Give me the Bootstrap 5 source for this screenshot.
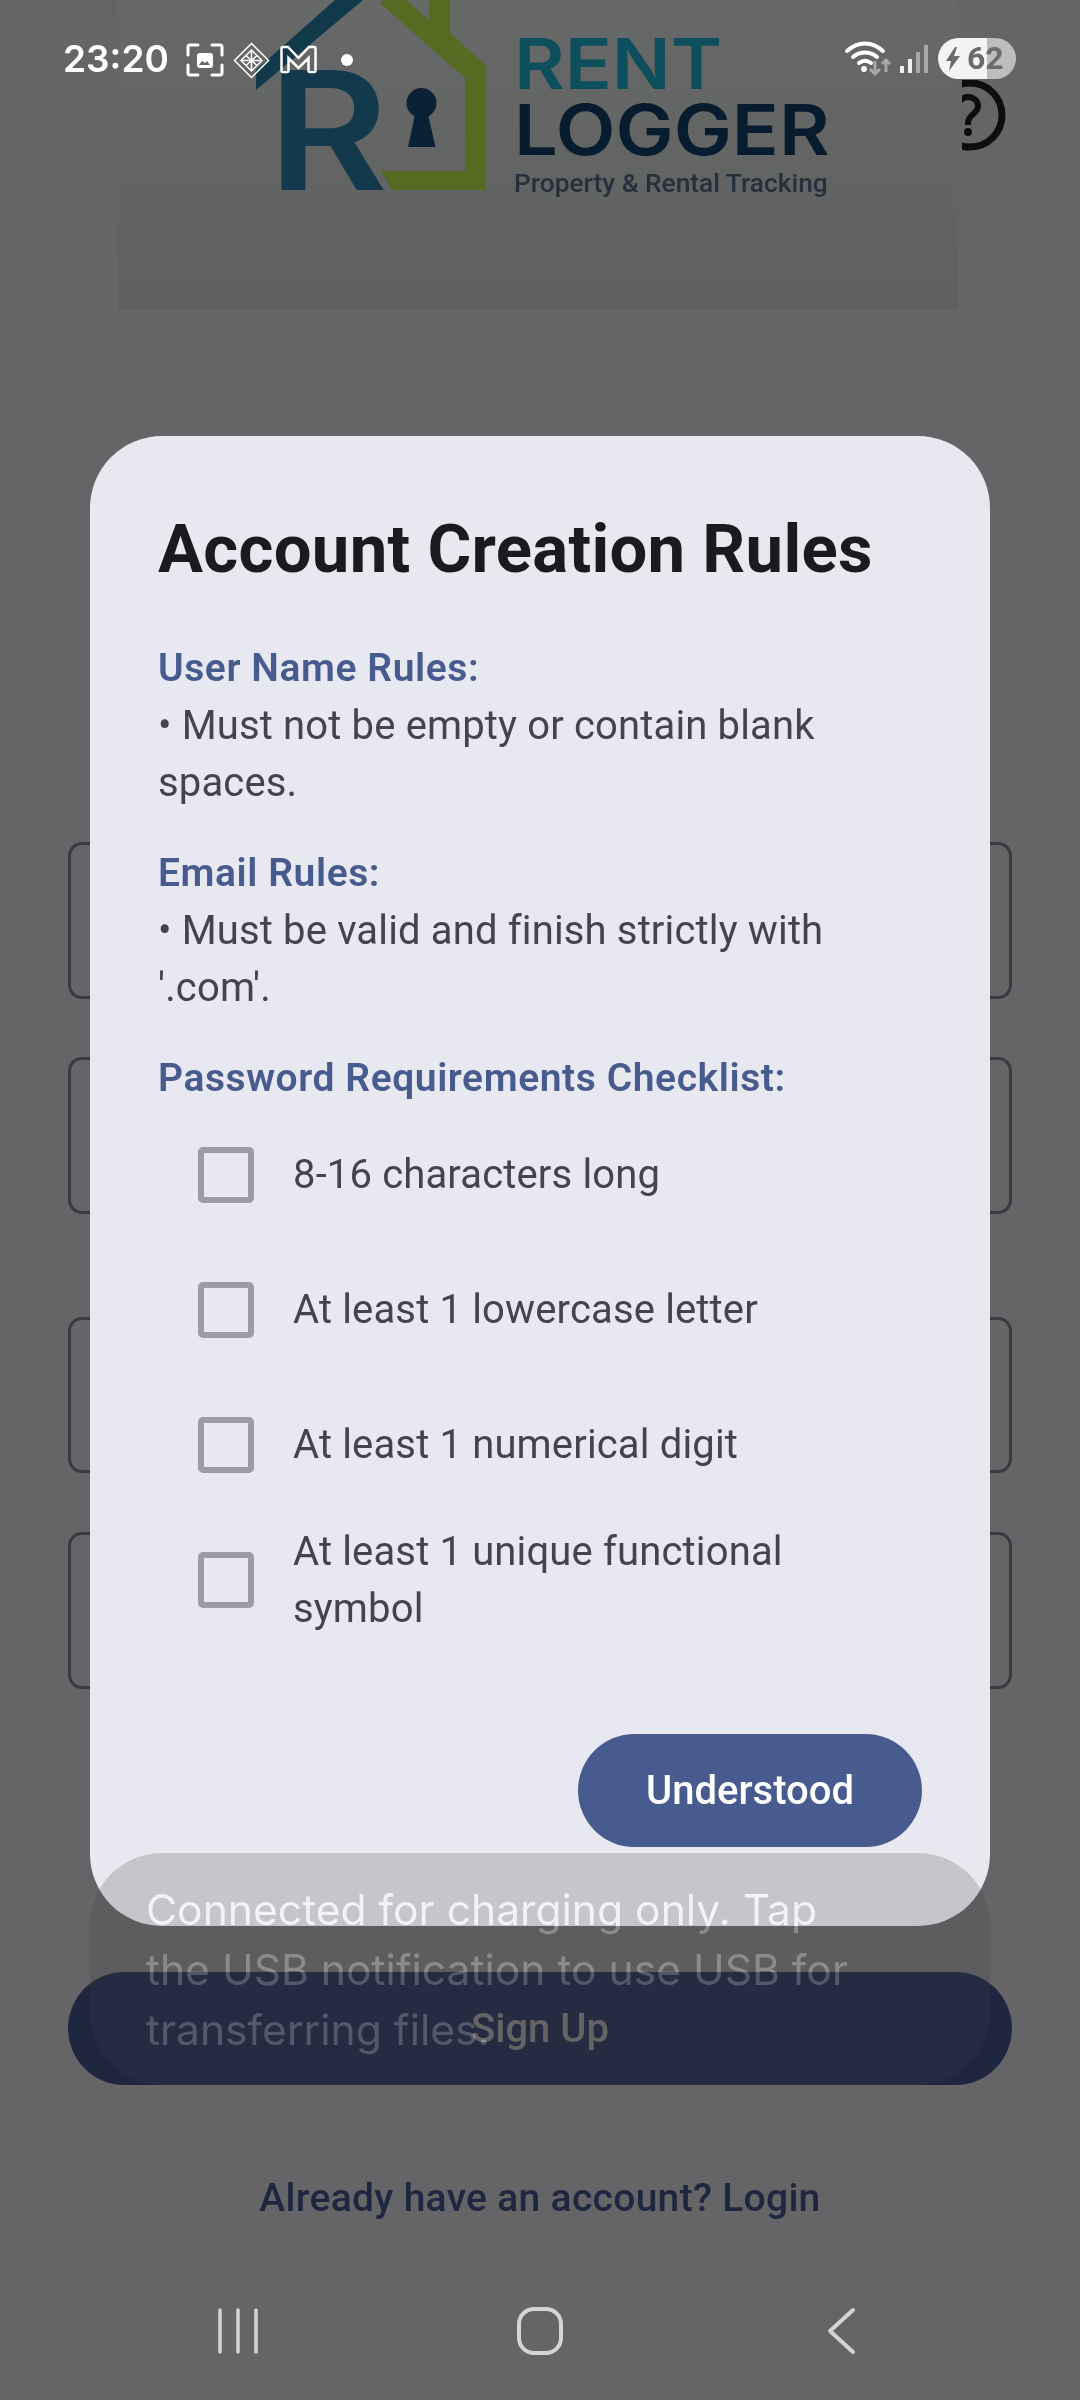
<!DOCTYPE html>
<html lang="en">
<head>
  <meta charset="UTF-8" />
  <meta name="viewport" content="width=device-width, initial-scale=1.0"/>
  <title>Account Creation Rules</title>
  <link href="https://cdn.jsdelivr.net/npm/bootstrap@5.3.0/dist/css/bootstrap.min.css" rel="stylesheet" />
  <style>
    body {
      width: 1080px;
      height: 2400px;
      background: #656567;
      font-family: Roboto, sans-serif;
      overflow: hidden;
    }
    .screen { width: 1080px; height: 2400px; }

    /* page behind the dialog */
    .logo-panel {
      width: 840px;
      height: 310px;
      margin-left: 118px;
      background: linear-gradient(180deg, #676868, #5f6060);
      overflow: hidden;
    }
    .logo-mark { width: 240px; height: 200px; margin-left: 138px; margin-right: 18px; flex: none; }
    .logo-words { padding-top: 27px; font-family: Inter, sans-serif; }
    .logo-rent, .logo-logger { font-size: 70px; font-weight: 600; transform: scaleX(1.11); transform-origin: left center; }
    .logo-rent { line-height: 74px; color: #0d4f5c; }
    .logo-logger { line-height: 70px; color: #071d2f; margin-top: -6px; }
    .logo-tag { font-family: Roboto, sans-serif; font-size: 26.3px; line-height: 32px; font-weight: 500; color: #25303c; margin-top: 2px; white-space: nowrap; }
    .field-box {
      width: 944px;
      height: 157px;
      margin-left: 68px;
      background: transparent;
      border: 3px solid #3a3a40;
      border-radius: 14px;
    }
    .field-one { margin-top: 532px; }
    .field-two { margin-top: 58px; }
    .field-three { margin-top: 103px; height: 156px; }
    .field-four { margin-top: 59px; }
    .signup-btn {
      width: 944px;
      height: 113px;
      margin: 283px 0 0 68px;
      background: #1e2640;
      border: 0;
      border-radius: 57px;
      color: #6e6e6e;
      font-size: 40px;
      font-weight: 500;
    }
    .login-line {
      margin-top: 90px;
      font-size: 39px;
      line-height: 46px;
      font-weight: 500;
      color: #1e2640;
      letter-spacing: .3px;
    }
    .nav-keys { height: 138px; }
    .nav-key { width: 302px; }

    /* status bar and help icon */
    .help-icon { top: 80px; left: 962px; }
    .status-bar { top: 0; left: 0; width: 1080px; height: 100px; color: #fff; }
    .status-time { left: 63px; top: 37px; font-family: Inter, sans-serif; font-size: 37px; line-height: 44px; font-weight: 600; }
    .status-svg { left: 0; top: 0; }
    .batt-pill {
      left: 938px;
      top: 38px;
      width: 78px;
      height: 41px;
      border-radius: 21px;
      background: linear-gradient(90deg, #f4f4f4 63%, #bdbdbd 63%);
      color: #6b6b6b;
      font-size: 32px;
      font-weight: 700;
      line-height: 41px;
      padding-left: 29px;
    }
    .bolt-icon { left: 946px; top: 47px; }

    /* dialog */
    .rules-dialog {
      left: 90px;
      top: 436px;
      width: 900px;
      height: 1490px;
      padding: 69px 68px 79px;
      background: #e8e8f0;
      border: 0;
      border-radius: 72px;
    }
    .rules-title { font-size: 67px; line-height: 88px; font-weight: 700; color: #1a1b20; margin: 0 0 47px; letter-spacing: .3px; white-space: nowrap; }
    .rules-block { font-size: 40px; line-height: 57px; color: #44444f; letter-spacing: .15px; margin-bottom: 34px; }
    .rules-head { font-size: 39px; line-height: 57px; font-weight: 600; color: #475b8f; letter-spacing: .58px; margin: 0; }
    .check-row { height: 135px; padding-left: 40px; gap: 39px; font-size: 40px; line-height: 57px; color: #44444f; letter-spacing: .15px; }
    .check-row .form-check-input {
      width: 56px;
      height: 56px;
      margin: 0;
      flex: none;
      background-color: transparent;
      border: 6px solid #9c9ca4;
      border-radius: 5px;
    }
    .understood-btn {
      width: 344px;
      height: 113px;
      margin-top: 87px;
      background: #475b8f;
      border: 0;
      border-radius: 57px;
      color: #fff;
      font-size: 40px;
      font-weight: 500;
    }

    /* toast */
    .usb-toast {
      left: 90px;
      top: 1853px;
      width: 900px;
      height: 232px;
      padding: 27px 120px 28px 56px;
      border-radius: 72px;
      background: rgba(68, 68, 68, .21);
    }
    .usb-text {
      font-family: Inter, sans-serif;
      font-size: 42.6px;
      line-height: 60px;
      color: rgb(46, 46, 44);
      mix-blend-mode: plus-lighter;
    }
  </style>
</head>
<body>
  <div class="screen position-relative">

    <!-- page behind -->
    <div class="d-flex flex-column h-100">
      <div class="logo-panel d-flex flex-shrink-0">
        <svg class="logo-mark" viewBox="258 0 240 200">
          <polygon points="337,0 365,0 258,90 258,70" fill="#12394a"/>
          <polygon points="382,3 386,0 408,0 431,20 431,0 452,0 452,33 487,65 487,190 394,190 383,171 467,171 467,78" fill="#556b22"/>
          <circle cx="423.500" cy="103" r="15" fill="#0a2136"/>
          <polygon points="418,110 429,110 437.500,147 410,147" fill="#0a2136"/>
          <text x="270" y="190" font-family="Inter, sans-serif" font-size="165" font-weight="600" fill="#123a4c" textLength="120" lengthAdjust="spacingAndGlyphs">R</text>
        </svg>
        <div class="logo-words">
          <div class="logo-rent">RENT</div>
          <div class="logo-logger">LOGGER</div>
          <div class="logo-tag">Property &amp; Rental Tracking</div>
        </div>
      </div>

      <input class="form-control field-box field-one flex-shrink-0" type="text" />
      <input class="form-control field-box field-two flex-shrink-0" type="text" />
      <input class="form-control field-box field-three flex-shrink-0" type="text" />
      <input class="form-control field-box field-four flex-shrink-0" type="text" />
      <button class="btn signup-btn flex-shrink-0" type="button">Sign Up</button>
      <div class="login-line text-center">Already have an account? Login</div>

      <div class="nav-keys d-flex justify-content-center align-items-center mt-auto">
        <div class="nav-key d-flex justify-content-center">
          <svg width="40" height="46" viewBox="0 0 40 46" fill="none" stroke="#d4d4d4" stroke-width="3.500" stroke-linecap="round">
            <path d="M2 2v42M20 2v42M38 2v42"/>
          </svg>
        </div>
        <div class="nav-key d-flex justify-content-center">
          <svg width="46" height="48" viewBox="0 0 46 48" fill="none" stroke="#d4d4d4" stroke-width="4">
            <rect x="2" y="2" width="42" height="44" rx="15"/>
          </svg>
        </div>
        <div class="nav-key d-flex justify-content-center">
          <svg width="30" height="48" viewBox="0 0 30 48" fill="none" stroke="#d4d4d4" stroke-width="4" stroke-linecap="round" stroke-linejoin="round">
            <path d="M26 3 3 24l23 21"/>
          </svg>
        </div>
      </div>
    </div>

    <svg class="help-icon position-absolute" width="48" height="72" viewBox="962 80 48 72" fill="none" stroke="#0d0d0f" stroke-width="7">
      <circle cx="970" cy="115" r="32"/>
      <path d="M957 108c1-7 6-11 11-11 6 0 10 4 10 9 0 8-10 8-10 17v2" stroke-width="6"/>
      <circle cx="968" cy="132" r="2" stroke-width="4" fill="#0d0d0f"/>
    </svg>

    <!-- dialog -->
    <div class="card rules-dialog position-absolute">
      <h2 class="rules-title">Account Creation Rules</h2>
      <div class="rules-block">
        <p class="rules-head">User Name Rules:</p>
        • Must not be empty or contain blank spaces.
      </div>
      <div class="rules-block">
        <p class="rules-head">Email Rules:</p>
        • Must be valid and finish strictly with '.com'.
      </div>
      <p class="rules-head">Password Requirements Checklist:</p>
      <div class="check-row d-flex align-items-center">
        <input class="form-check-input" type="checkbox" />
        <span>8-16 characters long</span>
      </div>
      <div class="check-row d-flex align-items-center">
        <input class="form-check-input" type="checkbox" />
        <span>At least 1 lowercase letter</span>
      </div>
      <div class="check-row d-flex align-items-center">
        <input class="form-check-input" type="checkbox" />
        <span>At least 1 numerical digit</span>
      </div>
      <div class="check-row d-flex align-items-center">
        <input class="form-check-input" type="checkbox" />
        <span>At least 1 unique functional symbol</span>
      </div>
      <div class="d-flex justify-content-end">
        <button class="btn understood-btn" type="button">Understood</button>
      </div>
    </div>

    <!-- toast -->
    <div class="usb-toast position-absolute">
      <div class="usb-text">Connected for charging only. Tap the USB notification to use USB for transferring files.</div>
    </div>

    <!-- status bar -->
    <div class="status-bar position-absolute">
      <span class="status-time position-absolute">23:20</span>
      <svg class="status-svg position-absolute" width="1080" height="100" viewBox="0 0 1080 100" fill="none" stroke="#fff">
        <!-- screenshot -->
        <path d="M198 45h-8a2 2 0 0 0-2 2v8M212 45h8a2 2 0 0 1 2 2v8M198 75h-8a2 2 0 0 1-2-2v-8M212 75h8a2 2 0 0 0 2-2v-8" stroke-width="3" stroke-linecap="round"/>
        <rect x="197" y="53" width="16" height="15" rx="3" fill="#fff" stroke="none"/>
        <path d="M199 65l3-4 3 2 2-2 3 4z" fill="#656567" stroke="none"/>
        <!-- diamond -->
        <path d="M251.500 43.500 268.500 60.500 251.500 77.500 234.500 60.500zM251.500 50 262 60.500 251.500 71 241 60.500zM241 60.500h21M246 55.500l11 10M257 55.500l-11 10M251.500 50v21" stroke-width="1.500"/>
        <!-- M -->
        <path d="M283 47h5l10.500 11L309 47h5a1.500 1.500 0 0 1 1.500 1.500v22a1.500 1.500 0 0 1-1.500 1.500h-4a1.500 1.500 0 0 1-1.500-1.500V58l-10 10-10-10v12.500a1.500 1.500 0 0 1-1.500 1.500h-4a1.500 1.500 0 0 1-1.500-1.500v-22A1.500 1.500 0 0 1 283 47z" stroke-width="2.500"/>
        <circle cx="347" cy="60" r="6" fill="#fff" stroke="none"/>
        <!-- wifi -->
        <path d="M847 51c11-10 25-10 36 0" stroke-width="4" stroke-linecap="round"/>
        <path d="M853 57c7-6 17-6 24 0" stroke-width="4" stroke-linecap="round"/>
        <path d="M859 63c4-3 8-3 12 0" stroke-width="4" stroke-linecap="round"/>
        <circle cx="864" cy="69" r="3" fill="#fff" stroke="none"/>
        <path d="M875 61v13M870 69l5 5 5-5" stroke="#a8a8a8" stroke-width="3"/>
        <path d="M886 72V60M882 64l4-4 4 4" stroke="#a8a8a8" stroke-width="3"/>
        <!-- signal -->
        <rect x="900" y="66" width="4" height="7" fill="#f0f0f0" stroke="none"/>
        <rect x="908" y="59" width="4" height="14" fill="#f0f0f0" stroke="none"/>
        <rect x="916" y="52" width="4" height="21" fill="#a8a8a8" stroke="none"/>
        <rect x="924" y="45" width="4" height="28" fill="#a8a8a8" stroke="none"/>
      </svg>
      <div class="batt-pill position-absolute">62</div>
      <svg class="bolt-icon position-absolute" width="14" height="24" viewBox="0 0 14 24">
        <path d="M9 0 0 14h5l-2 10 11-15H8l3-9z" fill="#6b6b6b"/>
      </svg>
    </div>
  </div>
  <script src="https://cdn.jsdelivr.net/npm/bootstrap@5.3.0/dist/js/bootstrap.bundle.min.js"></script>
</body>
</html>
